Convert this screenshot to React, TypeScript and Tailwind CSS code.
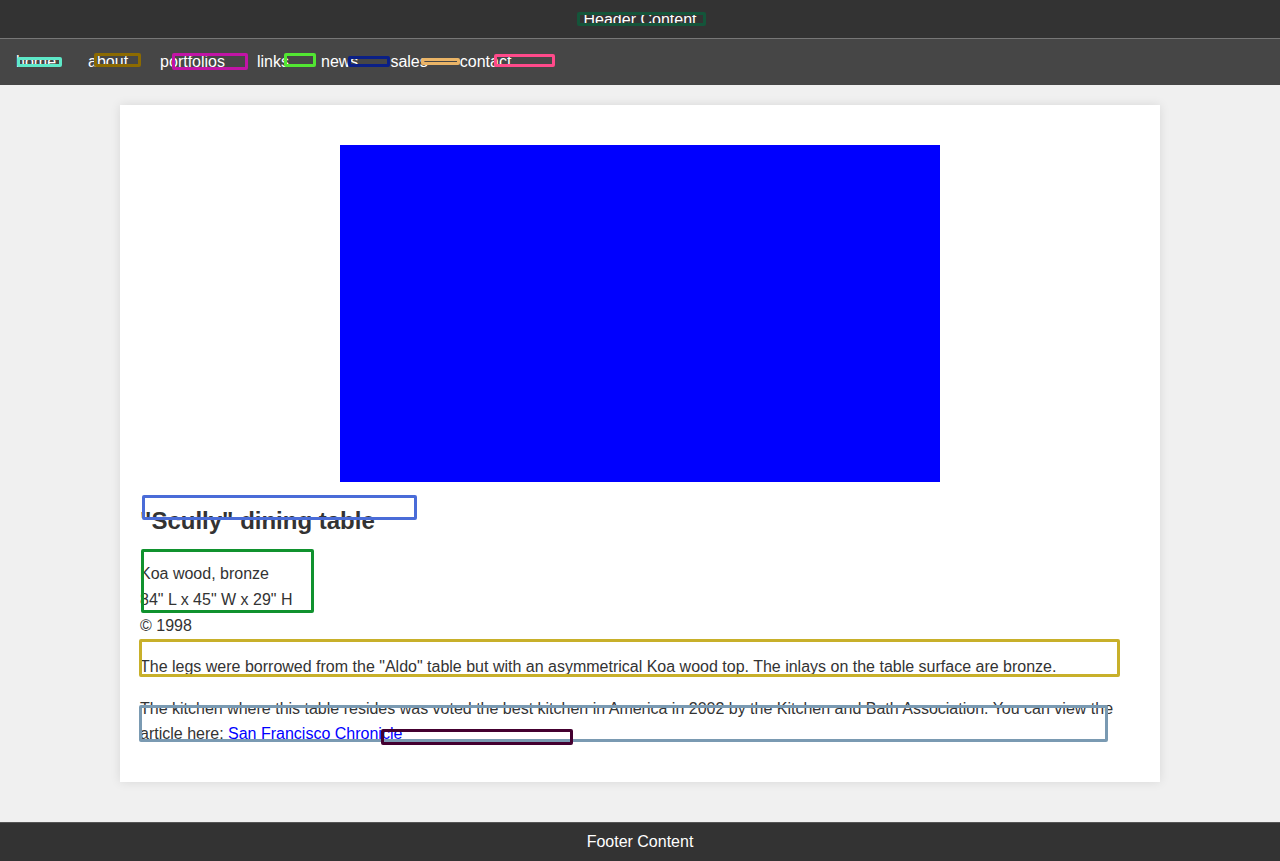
import React from 'react';

const NAV = ['home', 'about', 'portfolios', 'links', 'news', 'sales', 'contact'];

// debug outlines drawn over the page: [left, top, width, height, colour]
const BOXES: [number, number, number, number, string][] = [
  [577, 12, 129, 14, '#14553a'],
  [17, 57, 45, 10, '#5ee8c8'],
  [94, 53, 47, 14, '#8c6a00'],
  [172, 53, 76, 17, '#c214a6'],
  [284, 53, 32, 14, '#52e632'],
  [348, 56, 42, 11, '#0a1f86'],
  [421, 58, 39, 7, '#eab466'],
  [494, 54, 61, 13, '#ff4a8a'],
  [142, 495, 275, 25, '#4a6cd8'],
  [141, 549, 173, 64, '#10922e'],
  [139, 639, 981, 38, '#c8b02a'],
  [139, 705, 969, 37, '#7a9ab2'],
  [381, 729, 192, 16, '#440030'],
];

function Overlay() {
  return (
    <div className="pointer-events-none absolute inset-0">
      {BOXES.map(([x, y, w, h, c], i) => (
        <div
          key={i}
          className="absolute rounded-[2px] border-[3px]"
          style={{ left: x, top: y, width: w, height: h, borderColor: c }}
        />
      ))}
    </div>
  );
}

export default function App() {
  return (
    <div
      className="relative flex min-h-screen flex-col bg-[#f0f0f0] text-[16px] text-[#333]"
      style={{ fontFamily: '"Liberation Sans", Arial, sans-serif' }}
    >
      <header className="h-[39px] border-b border-[#777] bg-[#333] flex items-center justify-center pt-[2px] text-white">
        Header Content
      </header>
      <nav className="h-[46px] bg-[#464646] flex items-center gap-8 pl-4 text-white">
        {NAV.map((n) => (
          <a key={n} href="#" className="leading-none">
            {n}
          </a>
        ))}
      </nav>
      <main className="flex-1 px-[120px] pt-5 pb-10">
        <div className="bg-white px-5 pt-5 pb-[19px] shadow-[0_0_10px_rgba(0,0,0,0.1)] leading-[1.6]">
          <div className="mx-auto mt-5 h-[337px] w-[600px] bg-[#0000ff]" />
          <h2 className="mt-5 mb-5 text-[24px] font-bold">"Scully" dining table</h2>
          <div className="pt-px">
            Koa wood, bronze
            <br />
            84" L x 45" W x 29" H
            <br />© 1998
          </div>
          <p className="my-4">
            The legs were borrowed from the "Aldo" table but with an asymmetrical Koa wood top. The inlays on
            the table surface are bronze.
          </p>
          <p className="my-4">
            The kitchen where this table resides was voted the best kitchen in America in 2002 by the Kitchen
            and Bath Association. You can view the article here:{' '}
            <a href="#" className="text-[#0000ff] underline">
              San Francisco Chronicle
            </a>
          </p>
        </div>
      </main>
      <footer className="h-[39px] border-t border-[#555] bg-[#333] flex items-center justify-center text-white">
        Footer Content
      </footer>
      <Overlay />
    </div>
  );
}
